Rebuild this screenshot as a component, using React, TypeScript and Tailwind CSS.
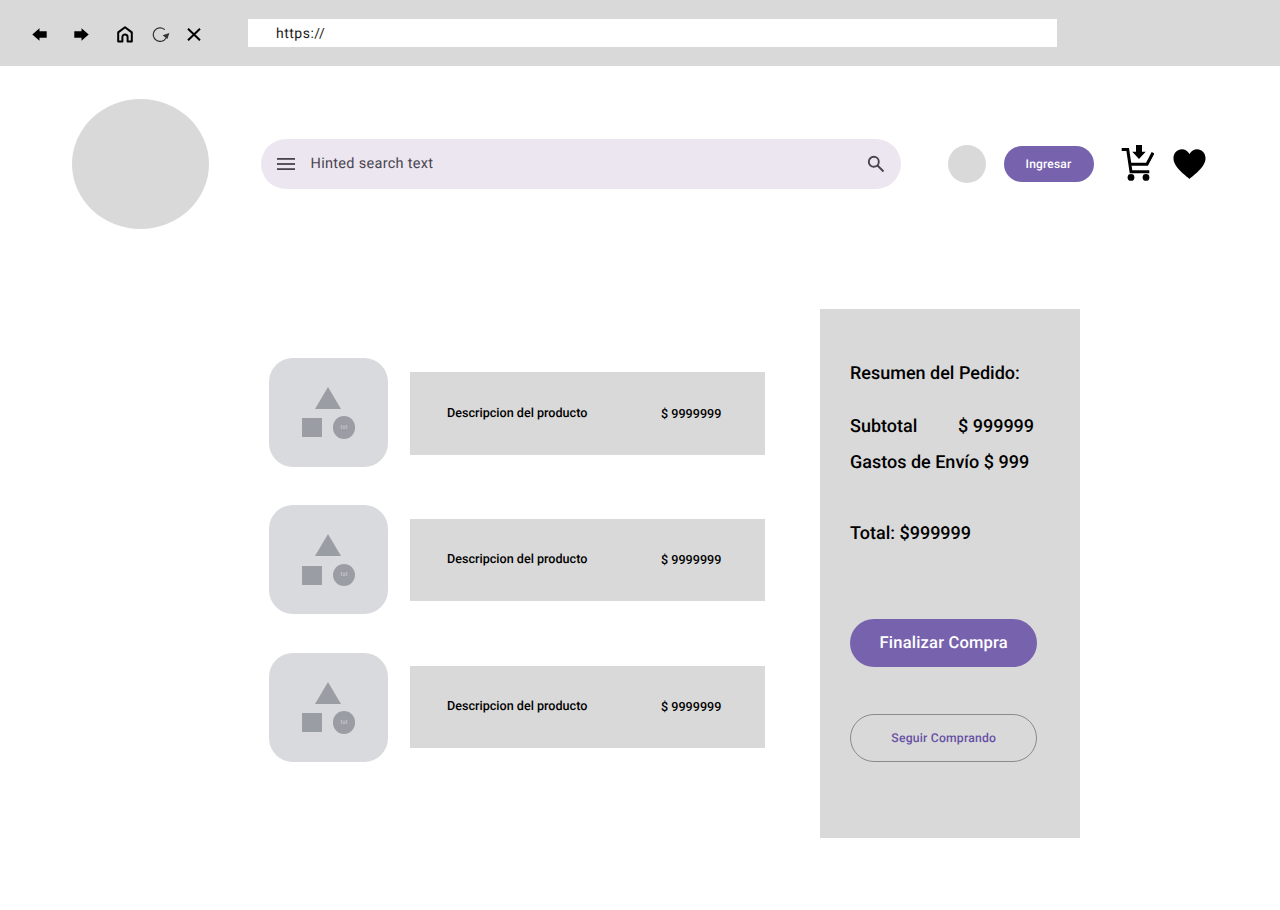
const ROOT = "font-['Roboto','Inter',sans-serif] [text-rendering:geometricPrecision]";

function ArrowLeft() {
  return (
    <svg width="15" height="13" viewBox="0 0 15 13" className="shrink-0">
      <path d="M0.3 6.5 L7.5 0.3 V3.2 H14.7 V9.8 H7.5 V12.7 Z" fill="#000" />
    </svg>
  );
}

function ArrowRight() {
  return (
    <svg width="15" height="13" viewBox="0 0 15 13" className="shrink-0">
      <path d="M14.7 6.5 L7.5 0.3 V3.2 H0.3 V9.8 H7.5 V12.7 Z" fill="#000" />
    </svg>
  );
}

function HomeIcon() {
  return (
    <svg width="16" height="17" viewBox="0 0 16 17" className="shrink-0" fill="none">
      <path d="M1.2 15.6 V6.4 L8 1.2 L14.8 6.4 V15.6 H10.6 V11 A2.6 2.6 0 0 0 5.4 11 V15.6 Z" stroke="#000" strokeWidth="2" strokeLinejoin="round" />
    </svg>
  );
}

function ReloadIcon() {
  return (
    <svg width="18" height="15" viewBox="0 0 18 15" className="shrink-0" fill="none">
      <path d="M12.4 2.4 A6.8 6.8 0 1 0 14 11" stroke="#333" strokeWidth="1.2" strokeLinecap="round" />
      <path d="M10.6 8.2 L17.4 6 L15.4 12 Z" fill="#333" />
    </svg>
  );
}

function CloseIcon() {
  return (
    <svg width="14" height="13" viewBox="0 0 14 13" className="shrink-0" fill="none">
      <path d="M1 0.7 L13 12.3 M13 0.7 L1 12.3" stroke="#000" strokeWidth="2" />
    </svg>
  );
}

function MenuIcon() {
  return (
    <svg width="18" height="12" viewBox="0 0 18 12" className="shrink-0" fill="#49454f">
      <rect x="0" y="0" width="18" height="1.8" />
      <rect x="0" y="5.1" width="18" height="1.8" />
      <rect x="0" y="10.2" width="18" height="1.8" />
    </svg>
  );
}

function SearchIcon() {
  return (
    <svg width="18" height="18" viewBox="0 0 18 18" className="shrink-0" fill="none">
      <circle cx="6.8" cy="6.8" r="5" stroke="#49454f" strokeWidth="1.9" />
      <path d="M10.5 10.5 L16.5 16.5" stroke="#49454f" strokeWidth="2" />
    </svg>
  );
}

function CartIcon() {
  return (
    <svg width="33" height="36" viewBox="0 0 33 36" className="shrink-0 mb-[2px]">
      <path d="M15 0 H21 V6.7 H24.7 L18 14 L11.3 6.7 H15 Z" fill="#000" />
      <path d="M0.7 4.6 H6.7 L10 26.7 H28.3" fill="none" stroke="#000" strokeWidth="3" />
      <path d="M8.6 19.3 H26 L32 7.8" fill="none" stroke="#000" strokeWidth="3" />
      <circle cx="10" cy="32.4" r="3.4" fill="#000" />
      <circle cx="25" cy="32.4" r="3.4" fill="#000" />
    </svg>
  );
}

function HeartIcon() {
  return (
    <svg width="33" height="30" viewBox="0 0 35 30" preserveAspectRatio="none" className="shrink-0 mb-[1px]">
      <path d="M17.5 30 C14 26.5 0.5 18.5 0.5 9.2 C0.5 3.8 4.7 0.3 9.3 0.3 C12.7 0.3 15.7 2 17.5 5 C19.3 2 22.3 0.3 25.7 0.3 C30.3 0.3 34.5 3.8 34.5 9.2 C34.5 18.5 21 26.5 17.5 30 Z" fill="#000" />
    </svg>
  );
}

function Thumb() {
  return (
    <div className="w-[118.4px] h-[108.6px] shrink-0 rounded-[24px] bg-[#d9dade] flex flex-col items-center justify-center pt-[1px]">
      <svg width="26" height="22" viewBox="0 0 26 22" className="shrink-0 -ml-[1.5px]">
        <path d="M13 0 L26 22 H0 Z" fill="#9a9da3" />
      </svg>
      <div className="flex items-center gap-[11px] mt-[7.5px]">
        <div className="w-[20px] h-[19px] bg-[#9a9da3]" />
        <div className="w-[22.5px] h-[22.5px] rounded-full bg-[#9a9da3] flex items-center justify-center text-[6px] leading-none font-medium text-[#c6c7cb]">
          txt
        </div>
      </div>
    </div>
  );
}

function ProductRow({ rowClass, barClass }: { rowClass: string; barClass: string }) {
  return (
    <div className={`flex items-start ${rowClass}`}>
      <Thumb />
      <div className={`ml-[22.3px] w-[354.6px] h-[82.4px] bg-[#d9d9d9] flex items-center pl-[37px] pt-[1px] text-[12.6px] font-medium text-black ${barClass}`}>
        <span className="w-[214px]">Descripcion del producto</span>
        <span className="pt-[2px]">$ 9999999</span>
      </div>
    </div>
  );
}

export default function App() {
  return (
    <div className={`w-[1280px] h-[910px] bg-white overflow-hidden ${ROOT}`}>
      <div className="h-[66px] bg-[#d9d9d9] flex items-center pl-[32px]">
        <div className="flex items-center pt-[2px]">
          <ArrowLeft />
          <div className="ml-[27px]"><ArrowRight /></div>
          <div className="ml-[28px]"><HomeIcon /></div>
          <div className="ml-[18.5px]"><ReloadIcon /></div>
          <div className="ml-[17px]"><CloseIcon /></div>
        </div>
        <div className="ml-[47.5px] w-[809px] h-[28px] bg-white flex items-center pl-[28px] pt-[2px] text-[14px] tracking-[0.5px] text-[#1d1b20]">
          https://
        </div>
      </div>

      <div className="flex items-center pl-[72px] pt-[33px]">
        <div className="w-[137px] h-[130px] rounded-[50%] bg-[#d9d9d9] shrink-0" />
        <div className="ml-[51.5px] w-[640px] h-[50px] rounded-full bg-[#ece6f0] flex items-center pl-[16px] pr-[16px] shrink-0">
          <MenuIcon />
          <span className="ml-[16px] text-[14.5px] tracking-[0.3px] text-[#49454f]">Hinted search text</span>
          <div className="ml-auto"><SearchIcon /></div>
        </div>
        <div className="ml-[47px] w-[38px] h-[38px] rounded-full bg-[#d9d9d9] shrink-0" />
        <div className="ml-[18px] w-[90px] h-[36px] rounded-full bg-[#7762ae] flex items-center justify-center text-[12px] font-medium tracking-[0.2px] text-white shrink-0">
          Ingresar
        </div>
        <div className="ml-[27.5px]"><CartIcon /></div>
        <div className="ml-[19px]"><HeartIcon /></div>
      </div>

      <div className="flex mt-[80px]">
        <div className="ml-[269.3px] pt-[49px] w-[496px]">
          <ProductRow rowClass="" barClass="mt-[14.3px]" />
          <ProductRow rowClass="mt-[38.9px]" barClass="mt-[13.5px]" />
          <ProductRow rowClass="mt-[38.9px]" barClass="mt-[12.7px]" />
        </div>
        <div className="ml-[54.7px] w-[260px] h-[529px] bg-[#d9d9d9] pl-[30px] pt-[53px] text-black shrink-0">
          <div className="text-[18px] font-medium leading-[24px]">Resumen del Pedido:</div>
          <div className="mt-[29px] flex text-[18px] font-medium leading-[24px]">
            <span className="w-[108px]">Subtotal</span>
            <span>$ 999999</span>
          </div>
          <div className="mt-[12px] text-[18px] font-medium leading-[24px]">Gastos de Envío $ 999</div>
          <div className="mt-[47px] text-[18px] font-medium leading-[24px]">Total: $999999</div>
          <div className="mt-[72.6px] w-[187.5px] h-[48px] rounded-full bg-[#7762ae] flex items-center justify-center pt-[4px] text-[16.5px] font-medium tracking-[0.2px] text-white">
            Finalizar Compra
          </div>
          <div className="mt-[47px] w-[187.5px] h-[48px] rounded-full border border-[#8a8a8a] flex items-center justify-center pt-[2px] text-[12.2px] font-medium tracking-[0.2px] text-[#6750a4]">
            Seguir Comprando
          </div>
        </div>
      </div>
    </div>
  );
}
